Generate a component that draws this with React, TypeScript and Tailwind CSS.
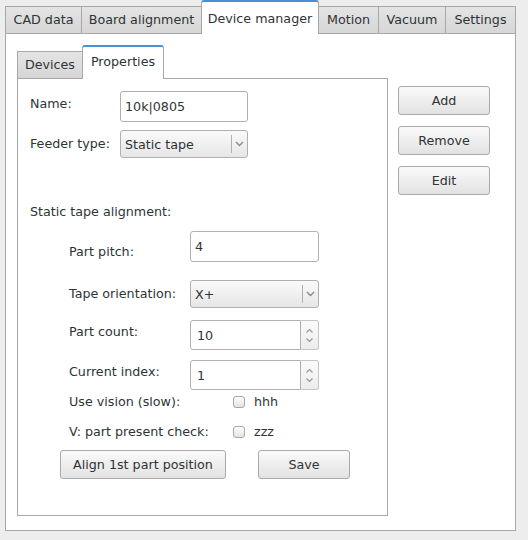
const tabs = [
  { label: "CAD data", w: "w-[77px]" },
  { label: "Board alignment", w: "w-[121px]" },
  { label: "Device manager", w: "w-[118px]", active: true },
  { label: "Motion", w: "w-[61px]" },
  { label: "Vacuum", w: "w-[68px]" },
  { label: "Settings", w: "w-[71px]" },
];

const btn =
  "flex items-center justify-center rounded-[3px] border border-[#a9a9a9] bg-gradient-to-b from-[#fafafa] to-[#e2e2e2] text-[#2e3436]";

function Chevron() {
  return (
    <svg width="9" height="6" viewBox="0 0 9 6">
      <path d="M1 1l3.5 3.5L8 1" fill="none" stroke="#8a8a8a" strokeWidth="1.4" />
    </svg>
  );
}

function Combo({ value, w }: { value: string; w: string }) {
  return (
    <div className={`${w} flex h-[28px] items-center rounded-[3px] border border-[#b0b0b0] bg-gradient-to-b from-[#fafafa] to-[#e6e6e6]`}>
      <span className="flex-1 pl-[4px] pt-[2px]">{value}</span>
      <span className="h-[18px] w-px bg-[#b0b0b0]" />
      <span className="flex w-[15px] justify-center">
        <Chevron />
      </span>
    </div>
  );
}

function Field({ value, w, h = "h-[31px]" }: { value: string; w: string; h?: string }) {
  return (
    <div className={`${w} ${h} flex items-center rounded-[3px] border border-[#b0b0b0] bg-white pl-[4px]`}>
      {value}
    </div>
  );
}

function Spin({ value }: { value: string }) {
  return (
    <div className="flex h-[30px] w-[129px]">
      <div className="flex flex-1 items-center rounded-l-[3px] border border-[#b0b0b0] bg-white pl-[6px] pt-[2px]">
        {value}
      </div>
      <div className="flex w-[18px] flex-col items-center justify-center gap-[5px] rounded-r-[3px] border border-l-0 border-[#c4c4c4] bg-gradient-to-b from-[#fafafa] to-[#ececec]">
        <svg width="7" height="4" viewBox="0 0 7 4">
          <path d="M0.5 3.5l3-3 3 3" fill="none" stroke="#999" strokeWidth="1.2" />
        </svg>
        <svg width="7" height="4" viewBox="0 0 7 4">
          <path d="M0.5 0.5l3 3 3-3" fill="none" stroke="#999" strokeWidth="1.2" />
        </svg>
      </div>
    </div>
  );
}

function Check({ text }: { text: string }) {
  return (
    <div className="flex items-center gap-[9px]">
      <span className="h-[12px] w-[12px] rounded-[3px] border border-[#a8a8a8] bg-gradient-to-b from-[#fdfdfd] to-[#e4e4e4]" />
      <span>{text}</span>
    </div>
  );
}

export default function App() {
  return (
    <div
      className="h-[540px] w-[528px] overflow-hidden bg-[#ededed] text-[12.7px] leading-[16px] text-[#2e3436]"
      style={{ fontFamily: '"DejaVu Sans", sans-serif' }}
    >
      <div className="flex h-[33px] items-end pl-[5px]">
        {tabs.map((t) =>
          t.active ? (
            <div
              key={t.label}
              className={`${t.w} relative z-10 -mb-px -ml-px flex h-[34px] items-start justify-center rounded-t-[3px] border-x border-t-2 border-x-[#a8a8a8] border-t-[#4a90d9] bg-white pt-[9px]`}
            >
              {t.label}
            </div>
          ) : (
            <div
              key={t.label}
              className={`${t.w} -ml-px flex h-[27px] items-center justify-center border border-b-0 border-[#a8a8a8] bg-gradient-to-b from-[#e4e4e4] to-[#d6d6d6] first:ml-0`}
            >
              {t.label}
            </div>
          ),
        )}
      </div>

      <div className="ml-[5px] flex h-[498px] w-[511px] gap-[10px] border border-[#a8a8a8] bg-white pl-[11px] pt-[11px]">
        <div className="flex w-[371px] flex-col">
          <div className="flex h-[33px] items-end">
            <div className="flex h-[27px] w-[66px] items-center justify-center border border-b-0 border-[#a8a8a8] bg-gradient-to-b from-[#e4e4e4] to-[#d6d6d6]">
              Devices
            </div>
            <div className="relative z-10 -mb-px -ml-px flex h-[34px] w-[82px] items-start justify-center rounded-t-[3px] border-x border-t-2 border-x-[#a8a8a8] border-t-[#4a90d9] bg-white pt-[7px]">
              Properties
            </div>
          </div>

          <div className="flex h-[438px] flex-col border border-[#a8a8a8] pl-[12px]">
            <div className="mt-[12px] flex items-start">
              <span className="w-[90px] pt-[5px]">Name:</span>
              <Field value="10k|0805" w="w-[128px]" />
            </div>
            <div className="mt-[8px] flex items-center">
              <span className="w-[90px]">Feeder type:</span>
              <Combo value="Static tape" w="w-[128px]" />
            </div>

            <div className="mt-[46px]">Static tape alignment:</div>

            <div className="pl-[39px]">
              <div className="mt-[11px] flex items-start">
                <span className="w-[121px] pt-[13px]">Part pitch:</span>
                <Field value="4" w="w-[129px]" />
              </div>
              <div className="mt-[18px] flex items-center">
                <span className="w-[121px]">Tape orientation:</span>
                <Combo value="X+" w="w-[129px]" />
              </div>
              <div className="mt-[12px] flex items-start">
                <span className="w-[121px] pt-[4px]">Part count:</span>
                <Spin value="10" />
              </div>
              <div className="mt-[10px] flex items-start">
                <span className="w-[121px] pt-[4px]">Current index:</span>
                <Spin value="1" />
              </div>
              <div className="mt-[4px] flex items-center">
                <span className="w-[164px]">Use vision (slow):</span>
                <Check text="hhh" />
              </div>
              <div className="mt-[14px] flex items-center">
                <span className="w-[164px]">V: part present check:</span>
                <Check text="zzz" />
              </div>
              <div className="-ml-[9px] mt-[10px] flex gap-[32px]">
                <div className={`${btn} h-[29px] w-[166px]`}>Align 1st part position</div>
                <div className={`${btn} h-[29px] w-[92px]`}>Save</div>
              </div>
            </div>
          </div>
        </div>

        <div className="mt-[41px] flex w-[92px] flex-col gap-[11px]">
          <div className={`${btn} h-[29px]`}>Add</div>
          <div className={`${btn} h-[29px]`}>Remove</div>
          <div className={`${btn} h-[29px]`}>Edit</div>
        </div>
      </div>
    </div>
  );
}
